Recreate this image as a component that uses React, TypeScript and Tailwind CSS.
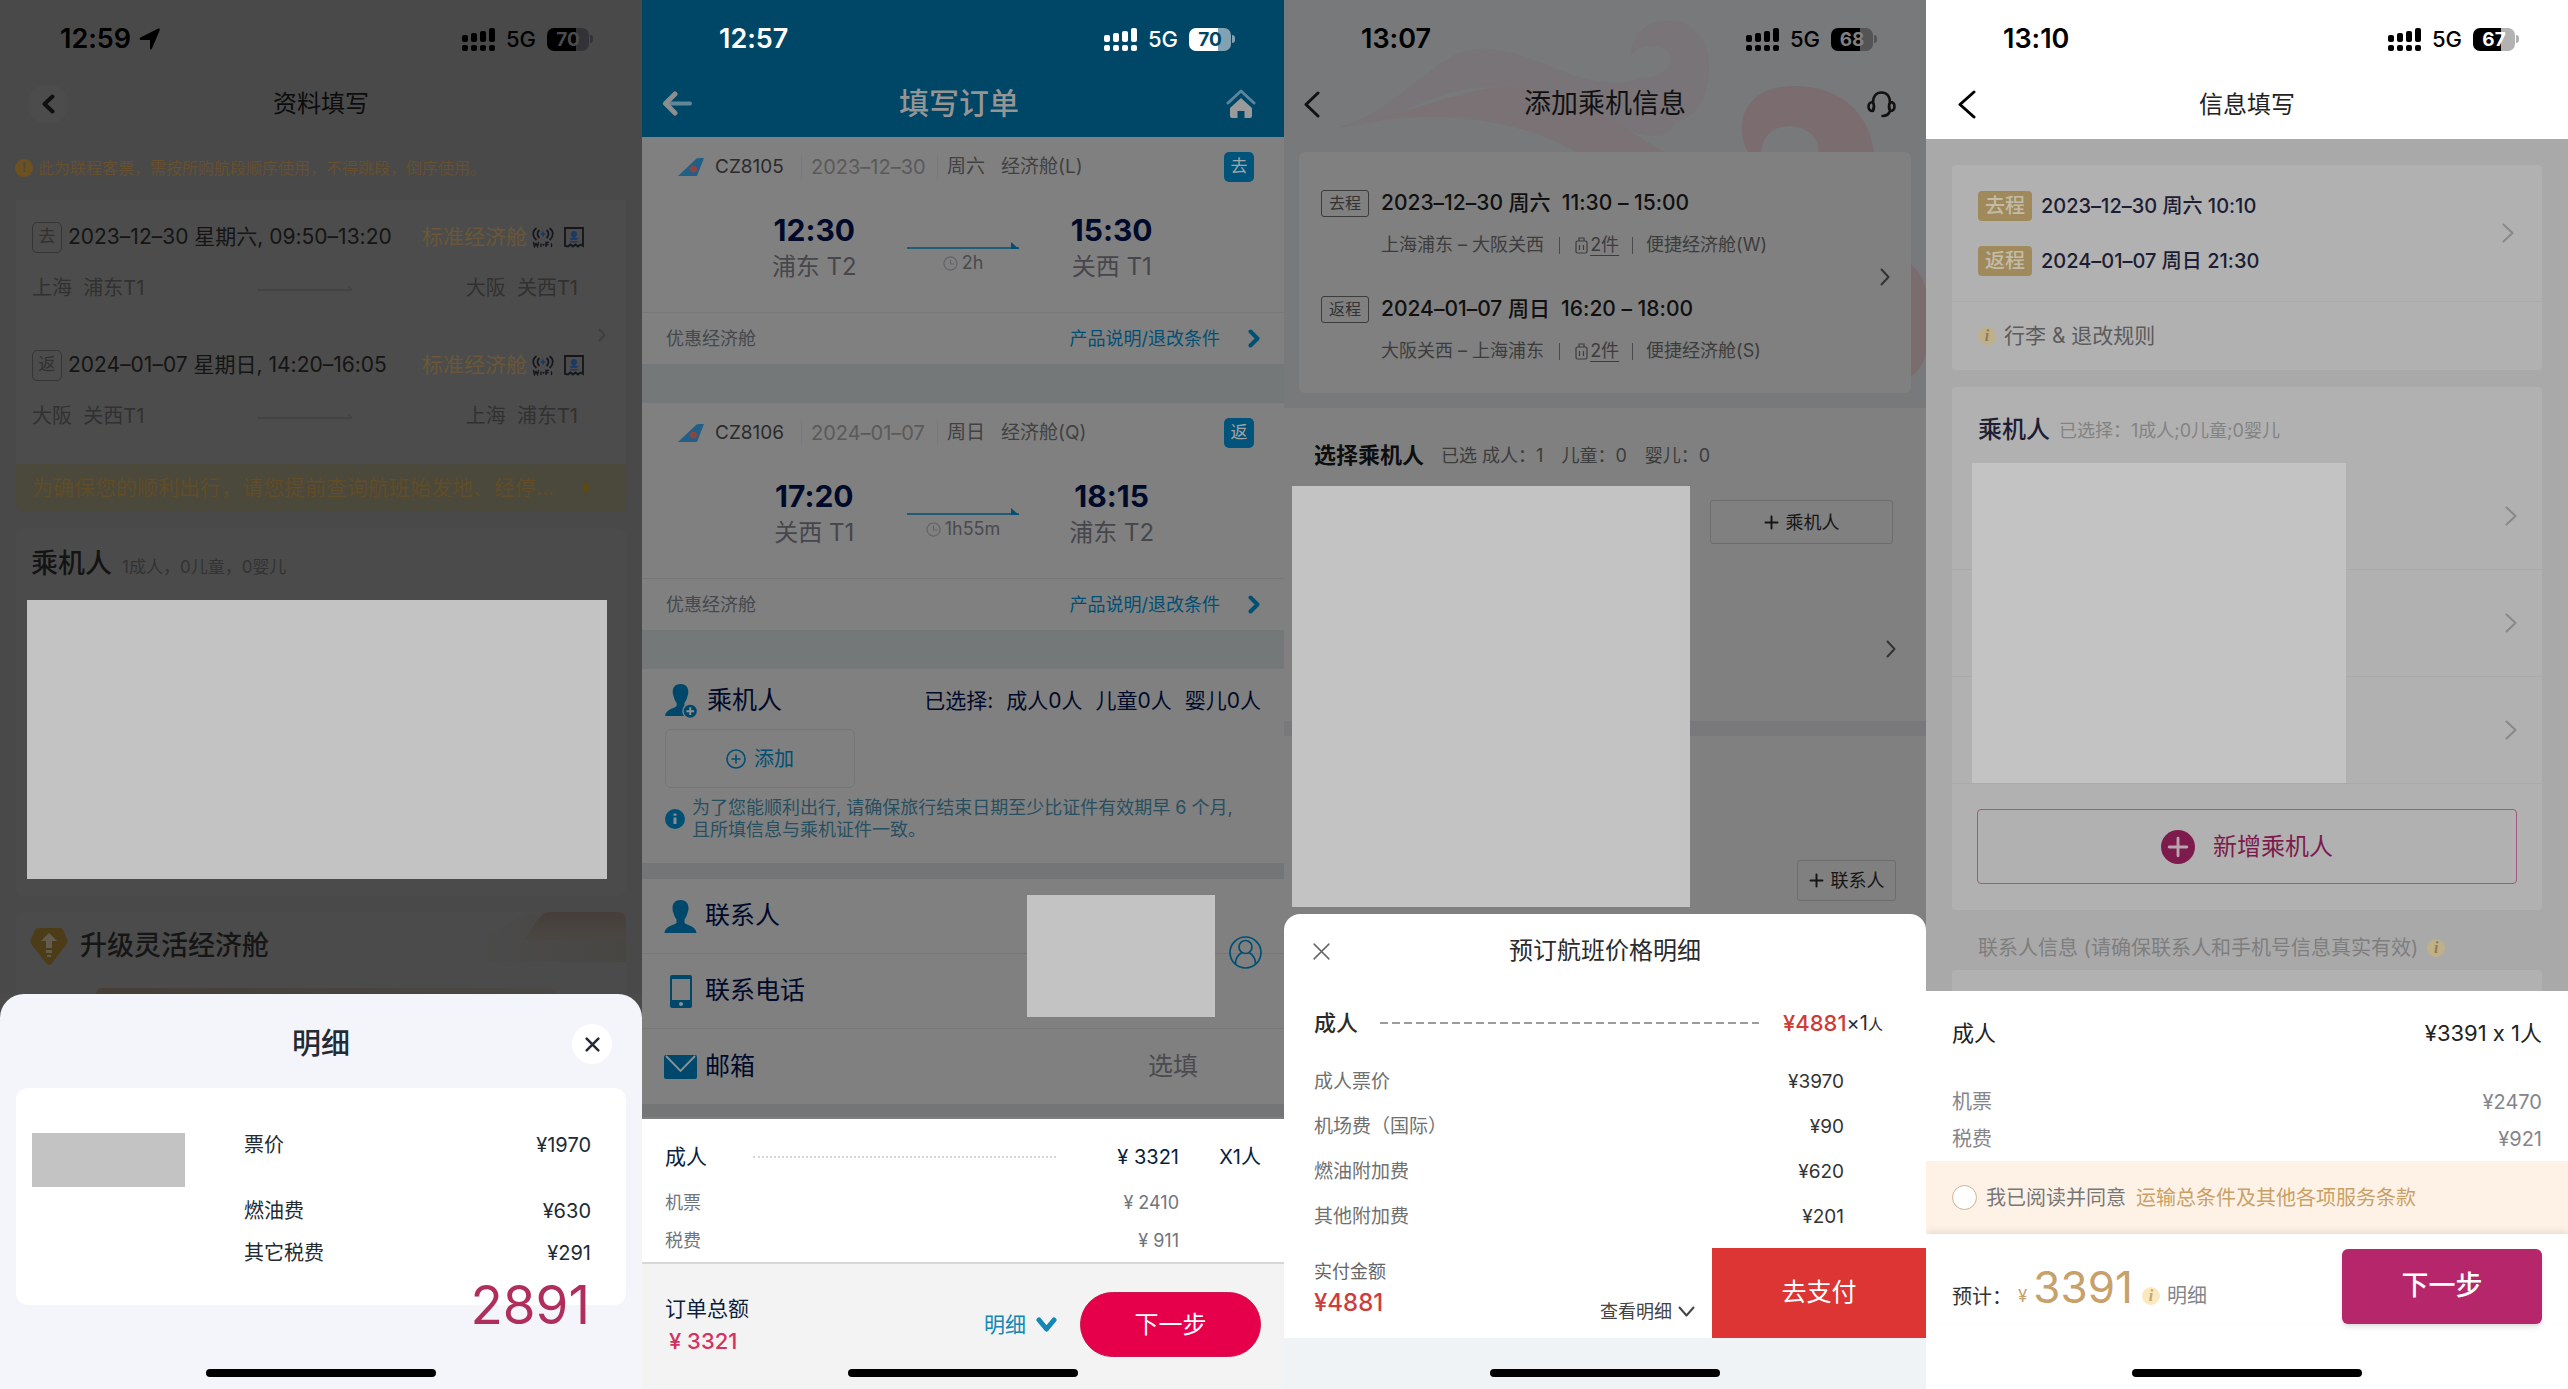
import type { ReactNode } from "react";

const FONT = "font-['Inter','Noto_Sans_CJK_SC',sans-serif] [font-feature-settings:'calt'_0]";

/* ---------- shared ---------- */

function SignalIcon() {
  return (
    <svg width="34" height="24" viewBox="0 0 34 24" fill="currentColor" aria-hidden="true">
      <rect x="0" y="8" width="6" height="7" rx="2" />
      <rect x="9" y="6" width="6" height="9" rx="2" />
      <rect x="18" y="4" width="6" height="11" rx="2" />
      <rect x="27" y="1" width="6" height="14" rx="2" />
      <rect x="0" y="18" width="6" height="6" rx="2" />
      <rect x="9" y="18" width="6" height="6" rx="2" />
      <rect x="18" y="18" width="6" height="6" rx="2" />
      <rect x="27" y="18" width="6" height="6" rx="2" />
    </svg>
  );
}

type StatusProps = {
  time: string;
  level: string;
  tone: string;
  battery: string;
  nub: string;
  located?: boolean;
};

function StatusBar({ time, level, tone, battery, nub, located }: StatusProps) {
  return (
    <div className={`relative flex h-[78px] shrink-0 items-center justify-between pr-[49px] ${located ? "pl-[60px]" : "pl-[77px]"} ${tone}`}>
      <div className="flex items-center gap-2 text-[27px] leading-8 font-semibold">
        {time}
        {located && (
          <svg width="21" height="22" viewBox="0 0 21 22" fill="currentColor" aria-hidden="true">
            <path d="M20.400.6c.5.3.6.8.4 1.300L13 20.600c-.5 1.300-2 1.100-2-.4V12H2C.4 12 .1 10.300 1.500 9.600L19.300.6c.4-.2.800-.2 1.100 0z" />
          </svg>
        )}
      </div>
      <div className="flex items-center">
        <SignalIcon />
        <span className="ml-[10px] text-[22px] leading-6 font-medium">5G</span>
        <span className={`ml-[11px] flex h-[23px] w-[42px] items-center justify-center rounded-[7px] text-[19px] leading-none font-bold ${battery}`}>
          {level}
        </span>
        <span className={`ml-[1px] h-2 w-[3px] rounded-r-full ${nub}`} />
      </div>
    </div>
  );
}

function HomeBar() {
  return (
    <div className="mt-auto flex h-8 shrink-0 items-center justify-center">
      <div className="h-2 w-[230px] rounded-full bg-black" />
    </div>
  );
}

type ChevronProps = { w: number; h: number; stroke: number; dir?: "left" | "right" | "down"; className?: string };

function Chevron({ w, h, stroke, dir = "right", className = "" }: ChevronProps) {
  const p = stroke / 2 + 0.5;
  const points =
    dir === "left"
      ? `${w - p},${p} ${p},${h / 2} ${w - p},${h - p}`
      : dir === "right"
        ? `${p},${p} ${w - p},${h / 2} ${p},${h - p}`
        : `${p},${p} ${w / 2},${h - p} ${w - p},${p}`;
  return (
    <svg width={w} height={h} viewBox={`0 0 ${w} ${h}`} fill="none" stroke="currentColor" strokeWidth={stroke} className={`shrink-0 ${className}`} aria-hidden="true">
      <polyline points={points} strokeLinecap="round" strokeLinejoin="round" />
    </svg>
  );
}

function Plus({ size, stroke }: { size: number; stroke: number }) {
  return (
    <svg width={size} height={size} viewBox="0 0 20 20" stroke="currentColor" strokeWidth={stroke} strokeLinecap="round" aria-hidden="true">
      <path d="M10 2v16M2 10h16" />
    </svg>
  );
}

function Cross({ size, stroke }: { size: number; stroke: number }) {
  return (
    <svg width={size} height={size} viewBox="0 0 18 18" stroke="currentColor" strokeWidth={stroke} strokeLinecap="round" aria-hidden="true">
      <path d="M2 2l14 14M16 2L2 16" />
    </svg>
  );
}

function Phone({ className, children }: { className: string; children: ReactNode }) {
  return <section className={`relative flex min-h-screen min-w-0 flex-col overflow-hidden whitespace-nowrap ${className}`}>{children}</section>;
}

/* ---------- screen 1 ---------- */

function WifiIcon() {
  return (
    <svg width="22" height="21" viewBox="0 0 22 21" fill="none" aria-hidden="true">
      <g stroke="#14161c" strokeWidth="1.700" strokeLinecap="round">
        <path d="M4 1.500C.3 4 .3 9.500 4 12.500M7 3.500c-2 1.800-2 5.200 0 7M18 1.500c3.700 2.500 3.700 8 0 11M15 3.500c2 1.800 2 5.200 0 7" />
        <path d="M1.500 15.500l1 4 1.500-3 1.500 3 1-4M9 17v2.500M11 17.800h1M14 19.500v-4h2.500M14 17.500h2M19.500 17v2.500" strokeWidth="1.400" />
      </g>
      <path d="M11 4.500v5M8.800 7h4.400" stroke="#1c3a66" strokeWidth="1.800" />
    </svg>
  );
}

function SeatIcon() {
  return (
    <svg width="20" height="21" viewBox="0 0 20 21" fill="none" aria-hidden="true">
      <path d="M1 19V1h18v18l-2.500-1.500L14 19.500l-2.500-2-2.500 2-2.500-2L4 19.500 1 19z" stroke="#14161c" strokeWidth="1.800" />
      <circle cx="10" cy="7" r="3" fill="#1c3a66" />
      <path d="M8.500 9h3v2H14l-1 2H7l-1-2h2.500zM6 14h8v1.500H6z" fill="#1c3a66" />
    </svg>
  );
}

function Leg1({ tag, date, from, to }: { tag: string; date: string; from: string; to: string }) {
  return (
    <div>
      <div className="flex h-[50px] items-center">
        <span className="flex h-[31px] w-[30px] items-center justify-center rounded-[5px] border border-[#353535] text-[17px] text-[#313131]">{tag}</span>
        <span className="ml-[6px] text-[21px] text-[#151515]">{date}</span>
        <span className="ml-auto text-[21px] text-[#6a5738]">标准经济舱</span>
        <span className="ml-[5px]"><WifiIcon /></span>
        <span className="ml-[10px]"><SeatIcon /></span>
      </div>
      <div className="flex h-[52px] items-center justify-between pr-[6px] text-[20px] text-[#313131]">
        <span className="w-[160px] whitespace-pre">{from}</span>
        <svg width="96" height="6" viewBox="0 0 96 6" aria-hidden="true">
          <path d="M0 5h95l-4-4" stroke="#3a3a3a" fill="none" />
        </svg>
        <span className="w-[160px] text-right whitespace-pre">{to}</span>
      </div>
    </div>
  );
}

function ScreenOne() {
  return (
    <Phone className="bg-[#494949]">
      <StatusBar time="12:59" level="70" tone="text-black" located battery="bg-[linear-gradient(90deg,#000_70%,#333337_70%)] text-[#4b4b4b]" nub="bg-[#333337]" />
      <header className="relative flex h-[52px] items-center justify-center">
        <button aria-label="返回" className="absolute left-7 flex size-10 items-center justify-center rounded-full bg-[#4c4c4c] text-[#101010]">
          <Chevron w={13} h={20} stroke={4} dir="left" />
        </button>
        <h2 className="text-[24px] text-[#0c0c0c]">资料填写</h2>
      </header>
      <p className="flex h-[70px] items-center gap-[5px] pt-[6px] pl-[15px] text-[16px] text-[#66502e]">
        <span className="flex size-[18px] items-center justify-center rounded-full bg-[#6d5120] text-[13px] font-bold text-[#4b4b4b]">!</span>
        此为联程客票，需按所购航段顺序使用，不得跳段，倒序使用。
      </p>
      <div className="mx-4 flex items-center bg-[#4c4c4c] pt-3 pr-[20px] pb-[22px] pl-4">
        <div className="flex min-w-0 flex-1 flex-col gap-[26px]">
          <Leg1 tag="去" date="2023–12–30 星期六, 09:50–13:20" from="上海  浦东T1" to="大阪  关西T1" />
          <Leg1 tag="返" date="2024–01–07 星期日, 14:20–16:05" from="大阪  关西T1" to="上海  浦东T1" />
        </div>
        <Chevron w={8} h={14} stroke={2} className="mt-4 ml-[14px] text-[#3f3f3f]" />
      </div>
      <div className="mx-4 flex h-12 items-center justify-between rounded-b-lg bg-[#4b483c] pr-[35px] pl-4 text-[21px] text-[#614d26]">
        <span>为确保您的顺利出行，请您提前查询航班始发地、经停...</span>
        <svg width="8" height="14" viewBox="0 0 8 14" fill="#5f4912" aria-hidden="true"><path d="M0 0l8 7-8 7z" /></svg>
      </div>
      <div className="mx-4 mt-4 rounded-lg bg-[#4b4b4b] pt-3 pr-[19px] pb-[17px] pl-[11px]">
        <h3 className="flex h-12 items-center gap-[10px] pl-1 text-[27px] font-medium text-[#141414]">
          乘机人 <small className="pt-2 text-[17px] font-normal text-[#333]">1成人，0儿童，0婴儿</small>
        </h3>
        <div className="mt-3 h-[279px] bg-[#c3c3c3]" />
      </div>
      <div className="relative mx-4 mt-4 flex-1 overflow-hidden rounded-t-lg bg-[#4b4b4b]">
        <svg className="absolute top-0 right-0" width="160" height="60" viewBox="0 0 160 60" aria-hidden="true">
          <defs>
            <linearGradient id="peach" x1="0" x2="0" y1="0" y2="1"><stop offset="0" stopColor="#463e38" /><stop offset="1" stopColor="#4a4743" /></linearGradient>
            <linearGradient id="peachSoft" x1="0" x2="1" y1="0" y2="0"><stop offset="0" stopColor="#4b4b4b" /><stop offset="1" stopColor="#484643" /></linearGradient>
          </defs>
          <path d="M0 50C30 14 50 2 80 0h80v50z" fill="url(#peachSoft)" />
          <path d="M58 28C70 12 74 0 84 0h76v28z" fill="url(#peach)" />
        </svg>
        <h3 className="relative flex h-[68px] items-center gap-3 pl-[14px] text-[27px] font-medium text-[#161616]">
          <svg width="38" height="39" viewBox="0 0 38 39" aria-hidden="true">
            <path d="M9 1h20c2 0 3 .6 4 2l4 9c1 2 .6 4-1 6L22 36c-2 2.500-4 2.500-6 0L2 18c-1.500-2-2-4-1-6l4-9c1-1.400 2-2 4-2z" fill="#4c3c18" />
            <path d="M19 6l8 8h-5v7h-6v-7h-5zM16 23h6v3h-6zM17 28h4v2h-4z" fill="#625c50" />
          </svg>
          升级灵活经济舱
        </h3>
        <div className="mt-2 ml-20 h-[6px] w-[460px] max-w-full rounded-t-lg bg-linear-to-r from-[#463e37] to-[#4a4845]" />
      </div>
      <div className="bg-[#4b4b4b]">
        <div className="flex min-h-[395px] flex-col rounded-t-[24px] bg-[#f4f5fa] text-[#222a33]">
          <div className="relative flex h-[94px] items-center justify-center pt-[6px]">
            <h2 className="text-[29px] font-medium">明细</h2>
            <button aria-label="关闭" className="absolute right-[30px] flex size-10 items-center justify-center rounded-full bg-white">
              <Cross size={15} stroke={3} />
            </button>
          </div>
          <div className="mx-4 flex h-[217px] items-start rounded-xl bg-white pr-[35px] pl-4">
            <div className="mt-[45px] h-[54px] w-[153px] bg-[#c3c3c3]" />
            <dl className="mt-9 ml-[59px] flex-1 text-[20px]">
              <div className="mb-6 flex h-[42px] items-center justify-between"><dt>票价</dt><dd>¥1970</dd></div>
              <div className="flex h-[42px] items-center justify-between"><dt>燃油费</dt><dd>¥630</dd></div>
              <div className="flex h-[42px] items-center justify-between"><dt>其它税费</dt><dd>¥291</dd></div>
            </dl>
          </div>
          <p className="-mt-[26px] pr-[52px] text-right text-[53px] leading-[52px] text-[#b02e5c]">2891</p>
          <HomeBar />
        </div>
      </div>
    </Phone>
  );
}

/* ---------- screen 2 ---------- */

type Leg2Props = {
  no: string; date: string; day: string; cabin: string; tag: string;
  dep: string; depAt: string; arr: string; arrAt: string; span: string;
};

function Leg2(p: Leg2Props) {
  return (
    <>
      <div className="bg-[#808080]">
        <div className="flex h-[60px] items-center pr-[30px] pl-9 text-[19px] text-[#414141]">
          <svg width="26" height="18" viewBox="0 0 26 18" aria-hidden="true">
            <path d="M0 18L17 2Q18 0 21 0h5l-7 18z" fill="#215f86" />
            <circle cx="15.500" cy="11" r="3.500" fill="#8f4444" />
          </svg>
          <span className="ml-[11px] w-[76px] text-[#2b2b2b]">{p.no}</span>
          <span className="ml-[10px] h-6 w-px bg-[#797979]" />
          <span className="ml-[9px] w-[116px] text-[20px] text-[#5a5a5a]">{p.date}</span>
          <span className="ml-[10px] h-6 w-px bg-[#797979]" />
          <span className="ml-[9px]">{p.day}</span>
          <span className="ml-[16px]">{p.cabin}</span>
          <span className="ml-auto flex size-[30px] items-center justify-center rounded-[5px] bg-[#00547b] text-[17px] text-[#a5a5a5]">{p.tag}</span>
        </div>
        <div className="mx-[98px] grid grid-cols-3 pt-[13px] pb-[30px] text-center">
          <div>
            <p className="text-[30px] leading-10 font-bold text-[#000a2a]">{p.dep}</p>
            <p className="pt-[2px] text-[24px] leading-[30px] text-[#46464c]">{p.depAt}</p>
          </div>
          <div className="flex flex-col items-center pt-[31px]">
            <svg width="112" height="8" viewBox="0 0 112 8" aria-hidden="true">
              <path d="M0 7h112" stroke="#004f74" strokeWidth="1.500" />
              <path d="M104 1l8 7h-8z" fill="#004f74" />
            </svg>
            <span className="mt-[3px] flex items-center gap-1 text-[18px] leading-[22px] text-[#4a4a4f]">
              <svg width="15" height="15" viewBox="0 0 16 16" fill="none" stroke="#626266" strokeWidth="1.200" aria-hidden="true">
                <circle cx="8" cy="8" r="7" /><path d="M8 4v4.500h4" />
              </svg>
              {p.span}
            </span>
          </div>
          <div>
            <p className="text-[30px] leading-10 font-bold text-[#000a2a]">{p.arr}</p>
            <p className="pt-[2px] text-[24px] leading-[30px] text-[#46464c]">{p.arrAt}</p>
          </div>
        </div>
        <div className="flex h-[52px] items-center justify-between border-t border-[#757779] pr-6 pl-6 text-[18px] text-[#45484c]">
          <span>优惠经济舱</span>
          <a href="#rules" className="flex items-center gap-7 text-[#004f74]">产品说明/退改条件 <Chevron w={12} h={19} stroke={4} /></a>
        </div>
      </div>
      <div className="h-[39px] bg-[#747878]" />
    </>
  );
}

const PERSON = "M16 0c-5 0-8 3-8 8 0 2 .4 3.500 1 5 .6 3 2 5 3 6.500v3C12 25 1 25 0 33h32c-1-8-12-8-12-10.500v-3c1-1.500 2.400-3.500 3-6.500.6-1.500 1-3 1-5 0-5-3-8-8-8z";

function ScreenTwo() {
  return (
    <Phone className="bg-[#808080]">
      <div className="bg-[#004666]">
        <StatusBar time="12:57" level="70" tone="text-white" battery="bg-[linear-gradient(90deg,#fff_70%,#80a2b3_70%)] text-[#004666]" nub="bg-[#80a2b3]" />
        <header className="flex h-[59px] items-center justify-between px-5 pb-2 text-[#8d8d8d]">
          <button aria-label="返回">
            <svg width="30" height="25" viewBox="0 0 30 25" fill="none" stroke="currentColor" strokeWidth="5" strokeLinecap="round" strokeLinejoin="round" aria-hidden="true">
              <path d="M6 12.500h22" stroke="#5f8797" strokeWidth="4" /><path d="M13 3L3.500 12.500 13 22" />
            </svg>
          </button>
          <h2 className="text-[30px] font-medium text-[#959595]">填写订单</h2>
          <button aria-label="首页" className="mr-2">
            <svg width="30" height="30" viewBox="0 0 30 30" aria-hidden="true">
              <path d="M2 14L15 2l13 12" fill="none" stroke="#5a859a" strokeWidth="3" strokeLinecap="round" strokeLinejoin="round" />
              <path d="M15 9l11 10v8q0 2-2 2h-5.500v-7h-7v7H6q-2 0-2-2v-8z" fill="#9a9a9a" />
            </svg>
          </button>
        </header>
      </div>
      <Leg2 no="CZ8105" date="2023–12–30" day="周六" cabin="经济舱(L)" tag="去" dep="12:30" depAt="浦东 T2" arr="15:30" arrAt="关西 T1" span="2h" />
      <Leg2 no="CZ8106" date="2024–01–07" day="周日" cabin="经济舱(Q)" tag="返" dep="17:20" depAt="关西 T1" arr="18:15" arrAt="浦东 T2" span="1h55m" />
      <div className="px-[23px] pt-2 pb-[22px]">
        <div className="flex h-12 items-center text-[#000a2a]">
          <svg width="33" height="35" viewBox="0 0 34 36" aria-hidden="true">
            <path d={PERSON} fill="#00486b" />
            <circle cx="26" cy="28" r="7.500" fill="#00486b" stroke="#808080" strokeWidth="1.500" />
            <path d="M26 24v8M22 28h8" stroke="#909090" strokeWidth="2" />
          </svg>
          <h3 className="ml-[9px] text-[25px]">乘机人</h3>
          <p className="ml-auto flex gap-[13px] text-[21px]">
            <span>已选择:</span><span>成人0人</span><span>儿童0人</span><span>婴儿0人</span>
          </p>
        </div>
        <button className="mt-1 flex h-[59px] w-[190px] items-center justify-center gap-2 rounded-md border border-[#747678] text-[20px] text-[#004f74]">
          <svg width="20" height="20" viewBox="0 0 20 20" fill="none" stroke="currentColor" strokeWidth="1.600" aria-hidden="true">
            <circle cx="10" cy="10" r="9" /><path d="M10 5.500v9M5.500 10h9" />
          </svg>
          添加
        </button>
        <div className="mt-[9px] flex items-center gap-[7px] text-[18px] leading-[22px] text-[#284f60]">
          <svg width="20" height="20" viewBox="0 0 20 20" aria-hidden="true">
            <circle cx="10" cy="10" r="10" fill="#004f74" /><path d="M10 8.500V15M10 4.500v2.200" stroke="#8c8c8c" strokeWidth="3" />
          </svg>
          <p>为了您能顺利出行, 请确保旅行结束日期至少比证件有效期早 6 个月,<br />且所填信息与乘机证件一致。</p>
        </div>
      </div>
      <div className="relative border-t-[16px] border-b-[13px] border-[#737577] text-[25px] text-[#000a2a]">
        <div className="flex h-[75px] items-center gap-2 border-b border-[#76787a] px-[22px]">
          <svg width="33" height="33" viewBox="0 0 32 33" fill="#00486b" aria-hidden="true"><path d={PERSON} /></svg>
          联系人
        </div>
        <div className="flex h-[75px] items-center gap-2 border-b border-[#76787a] px-[22px]">
          <svg width="33" height="33" viewBox="0 0 33 33" aria-hidden="true">
            <rect x="6" y="0" width="22" height="33" rx="2" fill="#00486b" /><rect x="8" y="4" width="18" height="21" fill="#808080" /><circle cx="17" cy="29" r="2" fill="#909090" />
          </svg>
          联系电话
        </div>
        <div className="flex h-[75px] items-center gap-2 pr-[86px] pl-[22px]">
          <svg width="33" height="24" viewBox="0 0 33 24" aria-hidden="true">
            <rect width="33" height="24" rx="2" fill="#00486b" /><path d="M2 1l14.500 15L31 1" stroke="#909090" strokeWidth="1.800" fill="none" />
          </svg>
          <label htmlFor="mail">邮箱</label>
          <input id="mail" type="email" placeholder="选填" className="min-w-0 flex-1 bg-transparent text-right placeholder:text-[#4b4b4e]" />
        </div>
        <div className="absolute top-[16px] right-[69px] h-[122px] w-[188px] bg-[#c3c3c3]" />
        <button aria-label="通讯录" className="absolute top-[57px] right-[22px] text-[#004f74]">
          <svg width="33" height="33" viewBox="0 0 33 33" fill="none" stroke="currentColor" strokeWidth="1.700" aria-hidden="true">
            <circle cx="16.500" cy="16.500" r="15.500" /><circle cx="16.500" cy="11" r="6.500" /><path d="M6.500 28c0-6 3-9.500 6.500-11.500M26.500 28c0-6-3-9.500-6.500-11.500" />
          </svg>
        </button>
      </div>
      <div className="mt-auto bg-white px-[23px] pt-3 pb-[3px] text-[18px] text-[#70757c]">
        <div className="flex h-[52px] items-center text-[20px] text-[#0a1d3c]">
          <span className="text-[21px]">成人</span>
          <span className="mr-[42px] ml-[46px] flex-1 border-t-2 border-dotted border-[#d5d5d5]" />
          <span className="w-[81px] text-right">¥ 3321</span>
          <span className="w-[82px] text-right">X1人</span>
        </div>
        <div className="flex h-[38px] items-center justify-between pr-[82px]"><span>机票</span><span>¥ 2410</span></div>
        <div className="flex h-[38px] items-center justify-between pr-[82px]"><span>税费</span><span>¥ 911</span></div>
      </div>
      <footer className="flex min-h-[127px] flex-col border-t-2 border-[#d6d6d6] bg-[#f3f3f3]">
        <div className="flex items-center px-[23px] pt-7">
          <div>
            <p className="text-[21px] leading-8 text-[#0a1d3c]">订单总额</p>
            <p className="pl-1 text-[22px] leading-8 font-medium text-[#d5315f]">¥ 3321</p>
          </div>
          <button className="ml-auto flex items-center gap-[10px] text-[21px] text-[#1286b5]">
            明细 <Chevron w={21} h={15} stroke={5} dir="down" />
          </button>
          <button className="ml-[23px] h-[65px] w-[181px] rounded-full border border-[#c9164c] bg-[#e6004b] text-[24px] text-white">下一步</button>
        </div>
        <HomeBar />
      </footer>
    </Phone>
  );
}

/* ---------- screen 3 ---------- */

function Leg3({ tag, date, route, cabin }: { tag: string; date: string; route: string; cabin: string }) {
  return (
    <div className="grid grid-cols-[60px_1fr]">
      <span className="flex h-[27px] w-12 items-center justify-center self-center rounded-[3px] border border-[#3c3c3c] text-[16px] text-[#333]">{tag}</span>
      <span className="text-[21px] leading-[42px] font-medium whitespace-pre text-[#101010]">{date}</span>
      <span className="col-start-2 flex items-center text-[18px] leading-[42px] text-[#3c3c3c]">
        {route}
        <span className="mx-[15px] h-[17px] w-px bg-[#4a4a4a]" />
        <svg width="13" height="17" viewBox="0 0 13 17" fill="none" stroke="currentColor" strokeWidth="1.200" aria-hidden="true">
          <rect x="1" y="4" width="11" height="12" rx="1.500" /><path d="M4 4V1h5v3M4.500 8v5M8.500 8v5" />
        </svg>
        <a href="#baggage" className="ml-[2px] underline underline-offset-4">2件</a>
        <span className="mx-[13px] h-[17px] w-px bg-[#4a4a4a]" />
        {cabin}
      </span>
    </div>
  );
}

const FEES = [
  ["成人票价", "¥3970"],
  ["机场费（国际）", "¥90"],
  ["燃油附加费", "¥620"],
  ["其他附加费", "¥201"],
];

function ScreenThree() {
  return (
    <Phone className="bg-[#77797b]">
      <svg className="absolute top-0 right-0" width="642" height="400" viewBox="0 0 642 400" aria-hidden="true">
        <path d="M50 128C95 118 120 88 165 58c38-22 85 2 120 16 35 12 60 10 70 4 40 0 40-32 14-32-14 0-20 6-22 9 0-20 14-34 38-34 30 0 44 26 39 58-3 22-14 40-34 44 0 8-10 16-30 12-40-8-100-56-172-47-50 8-80 36-138 40z" fill="#797477" />
        <path d="M50 128c60-8 110-34 160-40 70-6 115 34 172 64h-90c-60-34-140-46-242-24z" fill="#7a7275" />
        <path d="M464 152c-12-20-8-50 20-62 40-12 98 2 106 62h-56c2-14-10-24-26-26-18-1-30 10-31 26z" fill="#7a6c6f" />
        <path d="M612 260c24 0 34 28 34 64s-12 52-28 56z" fill="#7a6c6f" />
      </svg>
      <StatusBar time="13:07" level="68" tone="text-black" battery="bg-[linear-gradient(90deg,#000_68%,#545456_68%)] text-[#808080]" nub="bg-[#545456]" />
      <header className="relative flex h-[52px] items-center justify-center text-[#111]">
        <button aria-label="返回" className="absolute left-5"><Chevron w={16} h={27} stroke={3} dir="left" /></button>
        <h2 className="text-[27px]">添加乘机信息</h2>
        <button aria-label="客服" className="absolute right-[30px]">
          <svg width="29" height="27" viewBox="0 0 29 27" fill="none" stroke="currentColor" strokeWidth="2.600" strokeLinecap="round" strokeLinejoin="round" aria-hidden="true">
            <path d="M6 12C6 5 9.500 1.500 14.500 1.500S23 5 23 12M6 11c-3 0-4.500 2-4.500 4.500S3 20 6 20q2-4.500 0-9zM23 11c3 0 4.500 2 4.500 4.500S26 20 23 20q-2-4.500 0-9zM23 20c-1 3-4 5-7.500 5" />
          </svg>
        </button>
      </header>
      <div className="relative mx-[15px] mt-[22px] flex items-center rounded-md bg-[#808080] pt-[30px] pr-[21px] pb-[21px] pl-[22px]">
        <div className="flex min-w-0 flex-1 flex-col gap-[22px]">
          <Leg3 tag="去程" date="2023–12–30 周六  11:30 – 15:00" route="上海浦东 – 大阪关西" cabin="便捷经济舱(W)" />
          <Leg3 tag="返程" date="2024–01–07 周日  16:20 – 18:00" route="大阪关西 – 上海浦东" cabin="便捷经济舱(S)" />
        </div>
        <Chevron w={10} h={18} stroke={2} className="text-[#333]" />
      </div>
      <div className="relative mt-[15px] flex-1 bg-[#808080]">
        <div className="px-[30px] pt-7">
          <h3 className="flex h-[38px] items-center text-[22px] font-bold text-[#0e0e0e]">
            选择乘机人
            <small className="ml-[17px] flex gap-[18px] text-[18px] font-normal text-[#3c3c3c]">
              <span>已选 成人：1</span><span>儿童：0</span><span>婴儿：0</span>
            </small>
          </h3>
          <div className="mt-[26px] flex flex-col items-end">
            <button className="mr-[3px] flex h-11 w-[183px] items-center justify-center gap-[7px] rounded-[3px] border border-[#6d6d6d] text-[18px] text-[#151515]">
              <Plus size={15} stroke={2.6} /> 乘机人
            </button>
            <Chevron w={10} h={18} stroke={2} className="mt-[96px] mb-[63px] text-[#333]" />
          </div>
        </div>
        <div className="h-[15px] bg-[#79797b]" />
        <div className="flex justify-end pt-[124px] pr-[30px]">
          <button className="flex h-[41px] w-[99px] items-center justify-center gap-[7px] rounded-[3px] border border-[#6d6d6d] text-[18px] text-[#151515]">
            <Plus size={15} stroke={2.6} /> 联系人
          </button>
        </div>
        <div className="absolute top-[78px] left-2 h-[421px] w-[62%] bg-[#c3c3c3]" />
      </div>
      <div className="bg-[#808080]">
        <div className="flex min-h-[475px] flex-col overflow-hidden rounded-t-2xl bg-white">
          <div className="relative flex h-[74px] items-center justify-center text-[#2b2b2b]">
            <button aria-label="关闭" className="absolute left-7 text-[#666]"><Cross size={19} stroke={1.4} /></button>
            <h2 className="text-[24px]">预订航班价格明细</h2>
          </div>
          <div className="flex h-[70px] items-center pr-[43px] pl-[30px] text-[#2b2b2b]">
            <span className="text-[22px] font-medium">成人</span>
            <svg className="ml-[22px] h-[2px] flex-1" aria-hidden="true"><line x1="0" y1="1" x2="100%" y2="1" stroke="#9c9c9c" strokeWidth="2" strokeDasharray="8 4" /></svg>
            <span className="ml-6 text-[22px] font-medium text-[#cf3b36]">¥4881</span>
            <span className="text-[20px]">×1</span><span className="pt-1 text-[15px]">人</span>
          </div>
          <dl className="pt-[2px] pr-[82px] pb-2 pl-[30px] text-[19px] text-[#707070]">
            {FEES.map(([name, value]) => (
              <div key={name} className="flex h-[45px] items-center justify-between">
                <dt>{name}</dt>
                <dd className="text-[#333]">{value}</dd>
              </div>
            ))}
          </dl>
          <div className="flex h-[90px] items-stretch pl-[30px]">
            <div className="pt-[9px]">
              <p className="text-[18px] leading-[30px] text-[#666]">实付金额</p>
              <p className="text-[24px] leading-8 font-medium text-[#cd3d3d]">¥4881</p>
            </div>
            <button className="mr-[17px] ml-auto flex items-center gap-[6px] pt-9 text-[18px] text-[#444]">
              查看明细 <Chevron w={17} h={11} stroke={2} dir="down" />
            </button>
            <button className="w-[214px] bg-[#dd3434] text-[25px] text-white">去支付</button>
          </div>
          <div className="flex flex-1 flex-col bg-[#f0f3f5]"><HomeBar /></div>
        </div>
      </div>
    </Phone>
  );
}

/* ---------- screen 4 ---------- */

function InfoDot({ dim }: { dim?: boolean }) {
  return (
    <span className={`flex size-[18px] shrink-0 items-center justify-center rounded-full font-['Liberation_Serif',serif] text-[16px] leading-none font-bold italic ${dim ? "bg-[#bfb08a] text-[#8d7d58]" : "bg-[#fae8c0] text-[#c9a566]"}`}>
      i
    </span>
  );
}

function Leg4({ tag, date }: { tag: string; date: string }) {
  return (
    <p className="flex h-[55px] items-center gap-[9px] text-[20px] font-medium text-[#1d1d33]">
      <span className="flex h-[30px] w-[54px] items-center justify-center rounded-[4px] bg-[#a08a5b] text-[20px] text-[#c3bba8]">{tag}</span>
      {date}
    </p>
  );
}

function ScreenFour() {
  return (
    <Phone className="bg-[#a9a9a9]">
      <div className="bg-white">
        <StatusBar time="13:10" level="67" tone="text-black" battery="bg-[linear-gradient(90deg,#000_67%,#b2b2b2_67%)] text-white" nub="bg-[#b2b2b2]" />
        <header className="relative flex h-[61px] items-center justify-center pb-2">
          <button aria-label="返回" className="absolute left-8"><Chevron w={18} h={29} stroke={3} dir="left" /></button>
          <h2 className="text-[24px] text-[#222]">信息填写</h2>
        </header>
      </div>
      <div className="mx-[26px] mt-[26px] rounded-sm bg-[#b1b1b1]">
        <div className="flex items-center justify-between border-b border-[#aaaaaa] pt-[13px] pr-7 pb-[13px] pl-[26px]">
          <div>
            <Leg4 tag="去程" date="2023–12–30 周六 10:10" />
            <Leg4 tag="返程" date="2024–01–07 周日 21:30" />
          </div>
          <Chevron w={12} h={20} stroke={2} className="text-[#888]" />
        </div>
        <a href="#baggage-rules" className="flex h-[68px] items-center gap-2 pl-[26px] text-[21px] text-[#5c5c5c]">
          <InfoDot dim /> 行李 & 退改规则
        </a>
      </div>
      <div className="relative mx-[26px] mt-[17px] rounded-sm bg-[#b1b1b1] pb-[26px]">
        <h3 className="flex h-[76px] items-center gap-[9px] pt-[10px] pl-[26px] text-[24px] font-medium text-[#1d1d33]">
          乘机人 <small className="text-[18px] font-normal text-[#838383]">已选择：1成人;0儿童;0婴儿</small>
        </h3>
        {["a", "b", "c"].map((id) => (
          <div key={id} className="flex h-[107px] items-center justify-end border-b border-[#aaaaaa] pr-[25px]">
            <Chevron w={12} h={20} stroke={2} className="text-[#888]" />
          </div>
        ))}
        <div className="absolute top-[76px] left-5 h-[320px] w-[63.400%] bg-[#c3c3c3]" />
        <div className="px-[25px] pt-[25px]">
          <button className="flex h-[75px] w-full items-center justify-center gap-[18px] rounded-[4px] border border-[#a35a7a] text-[24px] text-[#7d1b4c]">
            <span className="flex size-[34px] items-center justify-center rounded-full bg-[#7d1b4c] text-[#b9a5ad]"><Plus size={22} stroke={2.6} /></span>
            新增乘机人
          </button>
        </div>
      </div>
      <p className="mx-[26px] flex h-[60px] items-center gap-[9px] pt-4 pl-[26px] text-[20px] text-[#7e7e7e]">
        <span>联系人信息 (请确保联系人和手机号信息真实有效)</span> <InfoDot dim />
      </p>
      <div className="mx-[26px] flex-1 rounded-t-sm bg-[#b1b1b1]" />
      <div className="flex min-h-[398px] flex-col bg-white text-[20px] text-[#85858a]">
        <div className="flex h-[84px] items-center justify-between px-[26px] text-[22px] text-[#222]">
          <span>成人</span><span>¥3391 x 1人</span>
        </div>
        <div className="mt-2 flex h-[37px] items-center justify-between px-[26px]"><span>机票</span><span>¥2470</span></div>
        <div className="flex h-[37px] items-center justify-between px-[26px]"><span>税费</span><span>¥921</span></div>
        <div className="mt-1 flex h-[73px] items-center bg-[#fef2e7] px-[26px]">
          <input id="agree" type="radio" className="size-[25px] appearance-none rounded-full border border-[#cfb38c] bg-white checked:bg-[#c9a066]" />
          <label htmlFor="agree" className="ml-[9px] text-[#777]">我已阅读并同意</label>
          <a href="#terms" className="ml-[10px] text-[#c9a066]">运输总条件及其他各项服务条款</a>
        </div>
        <div className="flex items-center px-[26px] pt-[15px] shadow-[0_-3px_6px_rgba(0,0,0,0.08)]">
          <span className="pt-5 text-[#333]">预计：</span>
          <span className="ml-[6px] pt-5 text-[17px] text-[#c8a06a]">¥</span>
          <strong className="ml-[6px] text-[44px] leading-[56px] font-normal text-[#c8a06a]">3391</strong>
          <button className="ml-[9px] flex items-center gap-[7px] pt-[18px]"><InfoDot /> 明细</button>
          <button className="ml-auto h-[75px] w-[200px] rounded-md bg-[#b5266b] text-[27px] font-medium text-white shadow-md">下一步</button>
        </div>
        <HomeBar />
      </div>
    </Phone>
  );
}

export default function App() {
  return (
    <main className={`grid min-h-screen grid-cols-4 ${FONT}`}>
      <ScreenOne />
      <ScreenTwo />
      <ScreenThree />
      <ScreenFour />
    </main>
  );
}
